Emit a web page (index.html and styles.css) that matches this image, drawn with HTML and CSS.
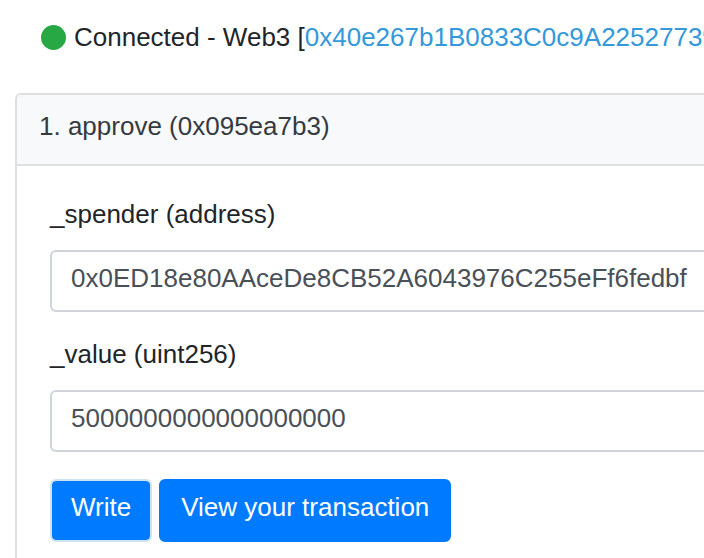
FILE: index.html
```html
<!DOCTYPE html>
<html lang="en">
<head>
  <meta charset="utf-8">
  <title>Write Contract</title>
  <link rel="stylesheet" href="styles.css">
</head>
<body>
  <main class="page">
    <div class="status">
      <span class="status-dot"></span>
      <p class="status-text">Connected - Web3 [<a class="address" href="#">0x40e267b1B0833C0c9A22527739</a></p>
    </div>
    <section class="card">
      <h2 class="card-header">1. approve (0x095ea7b3)</h2>
      <form class="card-body">
        <div class="field">
          <label for="spender">_spender (address)</label>
          <input id="spender" type="text" value="0x0ED18e80AAceDe8CB52A6043976C255eFf6fedbf">
        </div>
        <div class="field">
          <label for="value">_value (uint256)</label>
          <input id="value" type="text" value="5000000000000000000">
        </div>
        <div class="actions">
          <button class="button button-outlined" type="button">Write</button>
          <button class="button" type="button">View your transaction</button>
        </div>
      </form>
    </section>
  </main>
</body>
</html>
```

FILE: styles.css
```css
* {
  box-sizing: border-box;
}

body {
  margin: 0;
  overflow: hidden;
  background: #fff;
  color: #212529;
  font: 26px/30px "Liberation Sans", Arial, sans-serif;
}

.page {
  padding: 22px 0 0 15px;
}

.status {
  display: flex;
  align-items: center;
  gap: 8px;
  padding-left: 26px;
  margin-bottom: 41px;
  overflow: hidden;
  white-space: nowrap;
}

.status-dot {
  flex: none;
  width: 25px;
  height: 25px;
  border-radius: 50%;
  background: #28a745;
}

.status-text {
  margin: 0;
}

.address {
  color: #3498db;
  text-decoration: none;
}

/* The card and its fields are open on the right, flush with the window. */
.card {
  border: 2px solid #dfdfdf;
  border-right: 0;
  border-radius: 6px 0 0 6px;
}

.card-header {
  margin: 0;
  padding: 16px 22px 23px;
  border-bottom: 2px solid #dfdfdf;
  border-radius: 4px 0 0 0;
  background: #f8f9fb;
  color: #343a40;
  font: inherit;
}

.card-body {
  padding: 33px 0 32px 33px;
}

.field {
  display: flex;
  flex-direction: column;
  gap: 21px;
  margin-bottom: 27px;
}

.field input {
  width: 100%;
  height: 62px;
  padding: 11px 0 17px 19px;
  border: 2px solid #ced4da;
  border-right: 0;
  border-radius: 6px 0 0 6px;
  background: #fff;
  color: #495057;
  font: inherit;
}

.actions {
  display: flex;
  gap: 7px;
}

.button {
  padding: 11px 20px 18px;
  border: 2px solid #007bff;
  border-radius: 6px;
  background: #007bff;
  color: #fff;
  font: inherit;
}

.button-outlined {
  padding: 11px 19px 18px;
  border-color: #cfe2f3;
  background-clip: padding-box;
}
```
